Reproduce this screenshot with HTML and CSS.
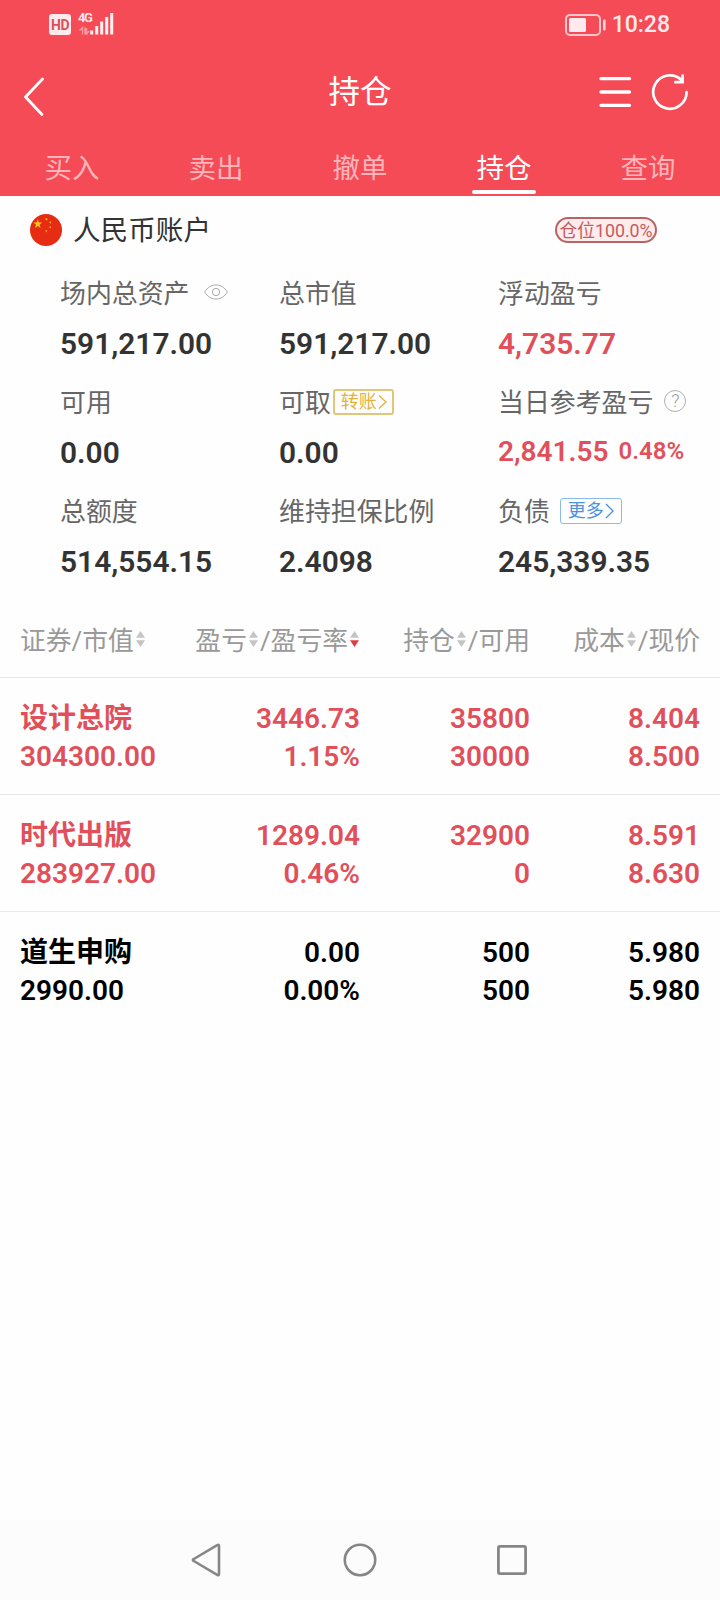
FILE: index.html
```html
<!DOCTYPE html>
<html lang="zh-CN">
<head>
<meta charset="utf-8">
<title>持仓</title>
<link rel="stylesheet" href="styles.css">
</head>
<body>
<div class="screen">
  <header class="header">
    <div class="status">
      <div class="status-left">
        <span class="hd">HD</span>
        <div class="network">
          <span class="net-type">4G</span>
          <svg class="signal" width="36" height="22" viewBox="0 0 36 22">
            <path d="M4.500 21.500v-7L1.500 17.500M7 14.500v7M8.500 15v6l2.500-3" fill="none" stroke="#fb959d" stroke-width="1.500"/>
            <path d="M13.700 17.500V21.500M18.700 13V21.500M23.700 8.500V21.500M28.700 4V21.500M33.700 0V21.500" stroke="#fff0f1" stroke-width="3"/>
          </svg>
        </div>
      </div>
      <div class="status-right">
        <svg width="42" height="22" viewBox="0 0 42 22">
          <rect x="1" y="1" width="34" height="20" rx="4" fill="none" stroke="#ffc5ca" stroke-width="2"/>
          <rect x="4" y="4" width="17" height="14" rx="1.500" fill="#ffebed"/>
          <rect x="38" y="5.500" width="2.600" height="11" rx="1" fill="#ffd5d8"/>
        </svg>
        <span class="clock">10:28</span>
      </div>
    </div>
    <div class="titlebar">
      <svg class="back" width="24" height="40" viewBox="0 0 24 40"><path d="M20.500 2 3.500 20 20 37.500" fill="none" stroke="#fff" stroke-width="2.800" stroke-linecap="round" stroke-linejoin="round"/></svg>
      <h1 class="title">持仓</h1>
      <div class="actions">
        <svg width="34" height="32" viewBox="0 0 34 32"><path d="M3 2.700h28.500M3 16h28.500M3 29.300h28.500" stroke="#fff" stroke-width="3.300" stroke-linecap="round"/></svg>
        <svg width="38" height="38" viewBox="0 0 38 38"><path d="M35.600 19A16.700 16.700 0 1 1 30.500 7M31.600 2.500V9.200H24.300" fill="none" stroke="#fff" stroke-width="2.700" stroke-linecap="round"/></svg>
      </div>
    </div>
    <nav class="tabs">
      <span class="tab">买入</span>
      <span class="tab">卖出</span>
      <span class="tab">撤单</span>
      <span class="tab active">持仓</span>
      <span class="tab">查询</span>
    </nav>
  </header>

  <section class="account">
    <svg width="32" height="32" viewBox="0 0 32 32">
      <circle cx="16" cy="16" r="16" fill="#e62c13"/>
      <path d="M7.800 5.200 8.900 8.500H12.300L9.600 10.600 10.600 14 7.800 12 5 14 6 10.600 3.300 8.500H6.700Z" fill="#fecb10"/>
      <path d="M15 4.500l2.300-.5.1 2.500-1.500-.3zM18.800 8l2.500-.8-.5 2.600zM18.400 13l2.500-1.100.1 2.700zM14.900 16.500l2.600-.2-1 2.300z" fill="#f9a51a"/>
    </svg>
    <span class="account-name">人民币账户</span>
    <span class="position">仓位100.0%</span>
  </section>

  <section class="summary">
    <div class="item">
      <div class="label">场内总资产
        <svg class="eye" width="24" height="16" viewBox="0 0 24 16"><path d="M.7 8C6-1.400 18-1.400 23.300 8 18 17.400 6 17.400.7 8Z" fill="none" stroke="#aaa"/><circle cx="12" cy="8" r="3.700" fill="none" stroke="#aaa"/></svg>
      </div>
      <div class="value">591,217.00</div>
    </div>
    <div class="item"><div class="label">总市值</div><div class="value">591,217.00</div></div>
    <div class="item"><div class="label">浮动盈亏</div><div class="value up">4,735.77</div></div>
    <div class="item"><div class="label">可用</div><div class="value">0.00</div></div>
    <div class="item">
      <div class="label">可取<span class="tag transfer">转账<svg width="9" height="16" viewBox="0 0 9 16"><path d="M1 1.500 8 8 1 14.500" fill="none" stroke="currentColor" stroke-width="1.300"/></svg></span></div>
      <div class="value">0.00</div>
    </div>
    <div class="item">
      <div class="label">当日参考盈亏<span class="help">?</span></div>
      <div class="value daily up">2,841.55<span class="rate">0.48%</span></div>
    </div>
    <div class="item"><div class="label">总额度</div><div class="value">514,554.15</div></div>
    <div class="item"><div class="label">维持担保比例</div><div class="value">2.4098</div></div>
    <div class="item">
      <div class="label">负债<span class="tag more">更多<svg width="9" height="16" viewBox="0 0 9 16"><path d="M1 1 8 8 1 15" fill="none" stroke="currentColor" stroke-width="1.300"/></svg></span></div>
      <div class="value">245,339.35</div>
    </div>
  </section>

  <section class="holdings">
    <div class="row head">
      <div class="cell">证券/市值<svg class="sort end" width="9" height="16" viewBox="0 0 9 16"><path d="M0 6.800 4.500 0 9 6.800Z" fill="#c4c4c4"/><path d="M0 9.200H9L4.500 16Z" fill="#c4c4c4"/></svg></div>
      <div class="cell">盈亏<svg class="sort" width="9" height="16" viewBox="0 0 9 16"><path d="M0 6.800 4.500 0 9 6.800Z" fill="#c4c4c4"/><path d="M0 9.200H9L4.500 16Z" fill="#c4c4c4"/></svg>/盈亏率<svg class="sort end" width="9" height="16" viewBox="0 0 9 16"><path d="M0 6.800 4.500 0 9 6.800Z" fill="#c4c4c4"/><path d="M0 9.200H9L4.500 16Z" fill="#e03c44"/></svg></div>
      <div class="cell">持仓<svg class="sort" width="9" height="16" viewBox="0 0 9 16"><path d="M0 6.800 4.500 0 9 6.800Z" fill="#c4c4c4"/><path d="M0 9.200H9L4.500 16Z" fill="#c4c4c4"/></svg>/可用</div>
      <div class="cell">成本<svg class="sort" width="9" height="16" viewBox="0 0 9 16"><path d="M0 6.800 4.500 0 9 6.800Z" fill="#c4c4c4"/><path d="M0 9.200H9L4.500 16Z" fill="#c4c4c4"/></svg>/现价</div>
    </div>
    <div class="row stock up">
      <div class="cell"><span>设计总院</span><span>304300.00</span></div>
      <div class="cell"><span>3446.73</span><span>1.15%</span></div>
      <div class="cell"><span>35800</span><span>30000</span></div>
      <div class="cell"><span>8.404</span><span>8.500</span></div>
    </div>
    <div class="row stock up">
      <div class="cell"><span>时代出版</span><span>283927.00</span></div>
      <div class="cell"><span>1289.04</span><span>0.46%</span></div>
      <div class="cell"><span>32900</span><span>0</span></div>
      <div class="cell"><span>8.591</span><span>8.630</span></div>
    </div>
    <div class="row stock">
      <div class="cell"><span>道生申购</span><span>2990.00</span></div>
      <div class="cell"><span>0.00</span><span>0.00%</span></div>
      <div class="cell"><span>500</span><span>500</span></div>
      <div class="cell"><span>5.980</span><span>5.980</span></div>
    </div>
  </section>

  <footer class="navbar">
    <svg width="34" height="34" viewBox="0 0 34 34"><path d="M28.200 2.200Q30 1 30 3.200V30.800Q30 33 28.200 31.800L4.800 18Q3 17 4.800 16Z" fill="none" stroke="#868686" stroke-width="2.600" stroke-linejoin="round"/></svg>
    <svg width="34" height="34" viewBox="0 0 34 34"><circle cx="17" cy="17" r="15.200" fill="none" stroke="#868686" stroke-width="2.600"/></svg>
    <svg width="34" height="34" viewBox="0 0 34 34"><rect x="3.400" y="3.400" width="27.200" height="27.200" rx="1.500" fill="none" stroke="#868686" stroke-width="2.800"/></svg>
  </footer>
</div>
</body>
</html>
```
FILE: styles.css
```css
* { box-sizing: border-box; }
body {
  margin: 0;
  background: #fefefe;
  font-family: Roboto, "Noto Sans CJK SC", sans-serif;
  color: #333;
}
svg { display: block; flex: none; }
.screen { width: 720px; height: 1600px; display: flex; flex-direction: column; }

.header { height: 196px; background: #f54b57; color: #fff; }
.status {
  height: 48px;
  padding: 0 50px 0 49px;
  display: flex;
  justify-content: space-between;
  align-items: center;
}
.status-left, .status-right { display: flex; align-items: center; }
.hd {
  width: 22px;
  height: 21px;
  margin-top: 1px;
  border-radius: 3px;
  background: #ffebed;
  color: #d8505a;
  font-size: 14px;
  font-weight: 700;
  line-height: 22px;
  letter-spacing: -0.5px;
  text-align: center;
}
.network { position: relative; margin-left: 7px; }
.net-type {
  position: absolute;
  left: 0;
  top: -1px;
  font-size: 13px;
  font-weight: 600;
  line-height: 12px;
  letter-spacing: -1.5px;
  color: #fff0f1;
}
.status-right { gap: 6px; padding-top: 1px; }
.clock { font-size: 23px; font-weight: 500; line-height: 24px; padding-top: 1px; margin-left: -1px; color: #ffe9eb; }

.titlebar {
  height: 88px;
  padding: 0 31px 0 22px;
  display: grid;
  grid-template-columns: 1fr auto 1fr;
  align-items: center;
}
.back { margin-top: 9px; }
.title { margin: 0 -9px 0 0; font-size: 31.500px; font-weight: 400; line-height: 86px; padding: 2px 0 0 0; }
.actions { display: flex; gap: 19px; align-items: center; justify-content: flex-end; }

.tabs { height: 60px; display: grid; grid-template-columns: repeat(5, 1fr); }
.tab {
  display: flex;
  flex-direction: column;
  align-items: center;
  font-size: 27.500px;
  line-height: 66px;
  color: #ffb5ba;
}
.tab.active { color: #fff; }
.tab.active::after {
  content: "";
  width: 64px;
  height: 4px;
  margin-top: -12px;
  border-radius: 2px;
  background: #fff;
}

.account { height: 68px; padding: 0 63px 0 30px; display: flex; align-items: center; }
.account-name { margin-left: 11px; padding-top: 2px; font-size: 27.600px; line-height: 40px; }
.position {
  margin-left: auto;
  width: 102px;
  height: 26px;
  border: 2px solid #b96464;
  border-radius: 13px;
  background: #ffecec;
  color: #c65a5e;
  font-size: 17.800px;
  line-height: 23px;
  text-align: center;
  white-space: nowrap;
}

.summary { padding: 4px 0 7px 60px; display: grid; grid-template-columns: repeat(3, 219px); }
.item { height: 109px; }
.label {
  height: 50px;
  padding-top: 2px;
  display: flex;
  align-items: center;
  font-size: 25.900px;
  line-height: 48px;
  color: #666;
  white-space: nowrap;
}
.eye { margin: 0 0 4px 15px; }
.value { font-size: 29.900px; font-weight: 600; line-height: 51px; white-space: nowrap; }
.value.daily { font-size: 28px; line-height: 49px; }
.rate { margin-left: 10px; font-size: 24px; vertical-align: 2px; line-height: 1; }
.tag {
  height: 26px;
  margin-bottom: 3px;
  padding: 0 5px 0 6px;
  display: flex;
  align-items: center;
  gap: 1px;
  border: 2px solid;
  border-radius: 3px;
  font-size: 18px;
  line-height: 22px;
}
.transfer { margin-left: 2px; color: #e2b33c; border-color: #e3c577; }
.more { margin-left: 10px; padding: 0 7px; color: #4b92e0; border: 1px solid #8abbea; }
.help {
  width: 22px;
  height: 22px;
  margin: 0 0 4px 11px;
  border: 1.500px solid #b0b0b0;
  border-radius: 50%;
  font-size: 18px;
  font-weight: 300;
  line-height: 20px;
  text-align: center;
  color: #999;
}

.holdings { flex: 1; }
.row { padding: 0 20px; display: grid; grid-template-columns: repeat(4, 170px); border-bottom: 1px solid #e8e8e8; }
.head { height: 76px; }
.head .cell {
  display: flex;
  align-items: center;
  justify-content: flex-end;
  padding-top: 3px;
  font-size: 25.800px;
  line-height: 72px;
  color: #999;
  white-space: nowrap;
}
.head .cell:first-child { justify-content: flex-start; }
.sort { margin: 0 2px 4px; }
.sort.end { margin-right: 1px; }
.stock { padding-top: 22px; padding-bottom: 18px; color: #000; }
.up, .stock.up { color: #e1505a; }
.stock:last-child { border-bottom: 0; }
.stock .cell {
  display: flex;
  flex-direction: column;
  align-items: flex-end;
  font-size: 28px;
  font-weight: 600;
  line-height: 38px;
}
.stock .cell:first-child { align-items: flex-start; }

.navbar {
  height: 80px;
  padding: 0 191px 0 189px;
  display: flex;
  align-items: center;
  justify-content: space-between;
  background: #fcfcfc;
}
.navbar svg:nth-child(2) { margin-left: 2px; }
```
